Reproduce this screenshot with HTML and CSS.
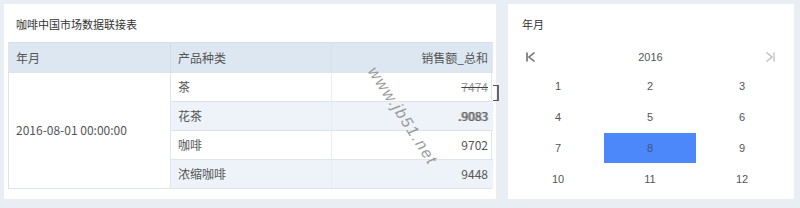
FILE: index.html
```html
<!DOCTYPE html>
<html lang="zh">
<head>
<meta charset="utf-8">
<link rel="stylesheet" href="styles.css">
</head>
<body>
<div class="page">
  <section class="panel table-panel">
    <div class="title">咖啡中国市场数据联接表</div>
    <div class="grid-table">
      <div class="th c1">年月</div>
      <div class="th c2">产品种类</div>
      <div class="th c3 num">销售额_总和</div>
      <div class="td c1 merged">2016-08-01 00:00:00</div>
      <div class="td c2">茶</div>
      <div class="td c3 num"><span class="strike">7474</span></div>
      <div class="td c2 alt">花茶</div>
      <div class="td c3 num alt"><span class="ghost">.9083</span></div>
      <div class="td c2">咖啡</div>
      <div class="td c3 num">9702</div>
      <div class="td c2 alt">浓缩咖啡</div>
      <div class="td c3 num alt">9448</div>
    </div>
    <div class="bracket"></div>
    <div class="watermark">www.jb51.net</div>
  </section>
  <section class="panel cal-panel">
    <div class="title cal-title">年月</div>
    <div class="nav">
      <svg class="ico" width="12" height="12" viewBox="0 0 12 12"><path d="M2 1.5v9M9.5 1.5L4 6l5.5 4.5" fill="none" stroke="#6f6f6f" stroke-width="1.6"/></svg>
      <span class="year">2016</span>
      <svg class="ico" width="12" height="12" viewBox="0 0 12 12"><path d="M10 1.5v9M2.5 1.5L8 6l-5.5 4.5" fill="none" stroke="#b8b8b8" stroke-width="1.2"/></svg>
    </div>
    <div class="months">
      <div class="m">1</div><div class="m">2</div><div class="m">3</div>
      <div class="m">4</div><div class="m">5</div><div class="m">6</div>
      <div class="m">7</div><div class="m sel">8</div><div class="m">9</div>
      <div class="m">10</div><div class="m">11</div><div class="m">12</div>
    </div>
  </section>
</div>
</body>
</html>
```
FILE: styles.css
```css
* { box-sizing: border-box; }
html, body { margin: 0; padding: 0; }
body {
  width: 800px;
  height: 208px;
  background: #e8eef4;
  font-family: "Noto Sans CJK SC", "Noto Sans", sans-serif;
  overflow: hidden;
}
.page {
  display: flex;
  gap: 12px;
  padding: 4px;
}
.panel {
  background: #fff;
  height: 195px;
  position: relative;
}
.table-panel {
  width: 492px;
  padding: 0 4px;
}
.title {
  height: 38px;
  line-height: 40px;
  padding-left: 8px;
  font-size: 11px;
  color: #333;
}
.grid-table {
  display: grid;
  grid-template-columns: 161px 161px 162px;
  grid-template-rows: 30px 29px 29px 29px 29px;
  border: 1px solid #dde4ec;
  border-top: 0;
  font-size: 12px;
  color: #555;
}
.th {
  background: #dde7f2;
  line-height: 30px;
  padding-left: 7px;
  border-top: 1px solid #d6e0ea;
}
.th.c2 { border-left: 1px solid #cfdbe7; }
.th.c3 { border-left: 1px solid #d8e2ec; }
.td {
  line-height: 28px;
  padding-left: 7px;
  border-top: 1px solid #dde4ec;
  position: relative;
}
.td.c2 { border-left: 1px solid #dde4ec; }
.td.c3 { border-left: 1px solid #e8edf2; }
.merged {
  grid-row: 2 / 6;
  display: flex;
  align-items: center;
  padding-bottom: 2px;
}
.alt { background: #eef3f9; }
.num { text-align: right; padding-right: 5px; padding-left: 0; }
.strike {
  text-decoration: line-through;
  text-decoration-color: #444;
  color: #999;
}
.ghost {
  color: #666;
  text-shadow: 1px 0 0 rgba(90, 90, 90, 0.6), -1px 0 0 rgba(140, 140, 140, 0.4);
}
.bracket {
  position: absolute;
  left: 489px;
  top: 81px;
  width: 6px;
  height: 16px;
  border-top: 1px solid #555;
  border-right: 2px solid #666;
  border-bottom: 1px solid #555;
}
.watermark {
  position: absolute;
  left: 342px;
  top: 103px;
  font-family: "Liberation Sans", sans-serif;
  font-style: italic;
  font-size: 16px;
  color: #9a9a9a;
  letter-spacing: 1.5px;
  transform: rotate(57deg);
  transform-origin: center;
}
.cal-panel {
  width: 286px;
  padding: 0 6px 0 4px;
}
.cal-title {
  height: 39px;
  line-height: 41px;
  padding-left: 10px;
}
.nav {
  height: 28px;
  display: flex;
  align-items: center;
  justify-content: space-between;
  padding: 0 12px 0 13px;
}
.ico { display: block; }
.year {
  font-family: "Liberation Sans", sans-serif;
  font-size: 11px;
  color: #555;
}
.months {
  display: grid;
  grid-template-columns: repeat(3, 92px);
  grid-auto-rows: 30px;
  row-gap: 1px;
}
.m {
  display: flex;
  align-items: center;
  justify-content: center;
  font-family: "Liberation Sans", sans-serif;
  font-size: 11px;
  color: #555;
}
.m.sel {
  background: #4d88fb;
  color: #3d5587;
}
```
